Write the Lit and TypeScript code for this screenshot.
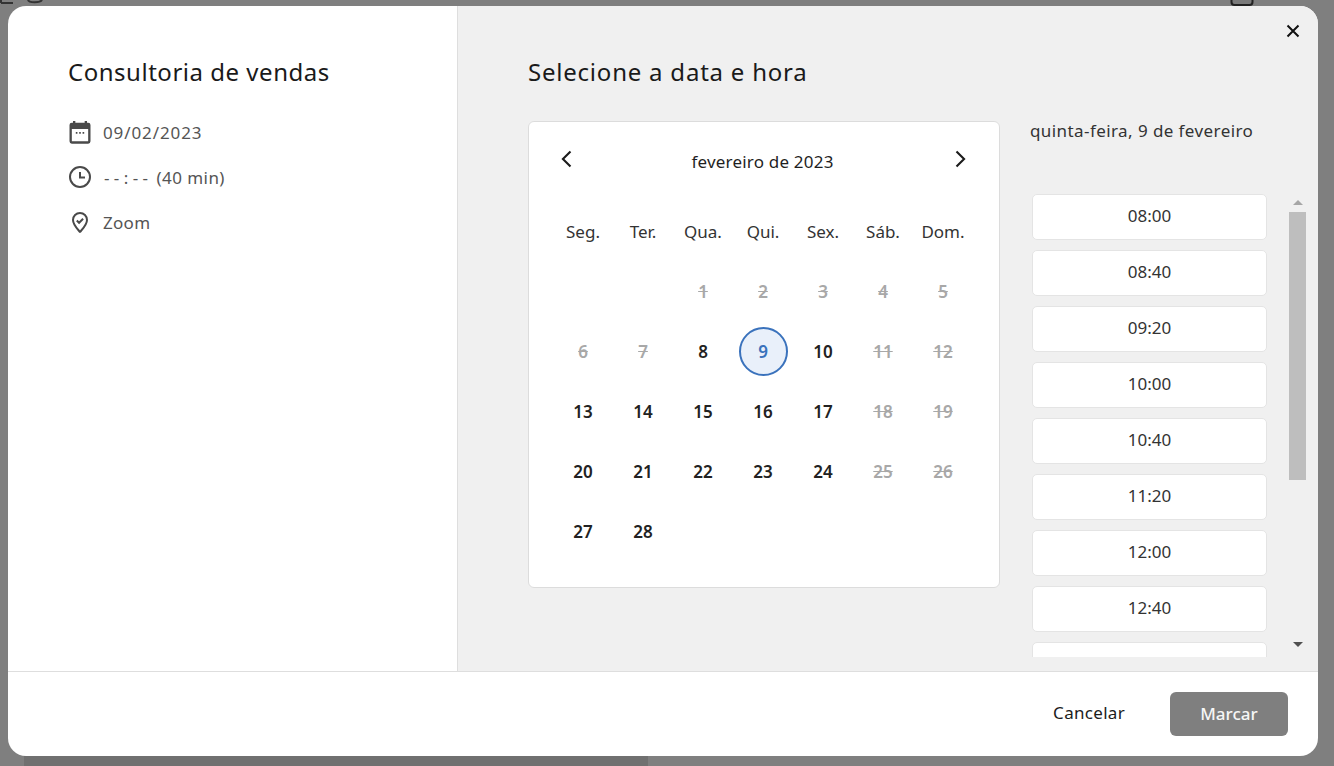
import { LitElement, html, css, svg } from "lit";
import { customElement } from "lit/decorators.js";

const WEEK = ["Seg.", "Ter.", "Qua.", "Qui.", "Sex.", "Sáb.", "Dom."];
const DISABLED = new Set([1, 2, 3, 4, 5, 6, 7, 11, 12, 18, 19, 25, 26]);
const SLOTS = ["08:00", "08:40", "09:20", "10:00", "10:40", "11:20", "12:00", "12:40", "13:20"];

@customElement("app-root")
export class AppRoot extends LitElement {
  static styles = css`
    :host {
      display: block;
      position: relative;
      width: 1334px;
      height: 766px;
      overflow: hidden;
      background: #7f7f7f;
      font-family: "Noto Sans", "Open Sans", sans-serif;
      color: #1c1c1c;
      box-sizing: border-box;
      padding: 6px 16px 10px 8px;
    }
    * { box-sizing: border-box; }
    .backdrop { position: absolute; left: 0; top: 0; width: 1334px; height: 766px; display: block; }
    .modal {
      position: relative;
      height: 750px;
      border-radius: 18px;
      background: #fff;
      overflow: hidden;
      display: flex;
      flex-direction: column;
    }
    .body { display: flex; height: 666px; flex: none; border-bottom: 1px solid #dedede; }
    .left {
      width: 450px;
      flex: none;
      border-right: 1px solid #dedede;
      padding: 50px 0 0 60px;
    }
    .left h2, .right h2 {
      margin: 0;
      font-size: 24px;
      line-height: 32px;
      font-weight: 400;
      color: #1a1a1a;
    }
    .left h2 { letter-spacing: 0.52px; }
    .right h2 { letter-spacing: 0.78px; }
    .info { margin-top: 29px; display: flex; flex-direction: column; gap: 15px; }
    .info-row {
      display: flex;
      align-items: center;
      height: 30px;
      gap: 11px;
      font-size: 17px;
      letter-spacing: 0.3px;
      color: #555;
    }
    .info-row svg { width: 24px; height: 24px; flex: none; overflow: visible; }
    .info-row svg.cal { width: 28px; height: 28px; margin: 0 -2px; }
    .date { letter-spacing: 0.9px; }
    .dash { letter-spacing: 4.4px; margin-right: 4px; margin-left: 1px; }
    .paren { letter-spacing: 0.45px; }
    .right { flex: 1; background: #f0f0f0; padding: 50px 0 0 70px; position: relative; }
    .columns { display: flex; margin-top: 33px; }
    .card {
      width: 472px;
      height: 467px;
      flex: none;
      background: #fff;
      border: 1px solid #dcdcdc;
      border-radius: 6px;
      padding: 0 24px;
    }
    .cal-head {
      height: 79px;
      display: flex;
      align-items: center;
      justify-content: space-between;
      font-size: 17px;
      letter-spacing: 0.2px;
      color: #1f1f1f;
      padding: 0 1px 0 0;
    }
    .cal-head span { padding-right: 2px; }
    .cal-head svg { width: 28px; height: 28px; display: block; margin-top: -5px; }
    .grid {
      display: grid;
      grid-template-columns: repeat(7, 60px);
      grid-auto-rows: 60px;
    }
    .wd {
      display: flex;
      align-items: center;
      justify-content: center;
      font-size: 17px;
      color: #333;
    }
    .day {
      display: flex;
      align-items: center;
      justify-content: center;
      font-size: 17px;
      font-weight: 600;
      color: #222;
    }
    .day.off { color: #a8a8a8; text-decoration: line-through; }
    .day.sel span {
      width: 49px;
      height: 49px;
      border-radius: 50%;
      border: 2px solid #3a72bc;
      background: #e9f0fa;
      color: #3a72bc;
      display: flex;
      align-items: center;
      justify-content: center;
    }
    .times { margin-left: 30px; width: 290px; }
    .times-title { font-size: 17px; line-height: 20px; letter-spacing: 0.42px; color: #333; white-space: nowrap; }
    .scroller { display: flex; margin-top: 53px; margin-left: 2px; height: 463px; }
    .slots { width: 235px; height: 463px; overflow: hidden; display: flex; flex-direction: column; gap: 10px; flex: none; }
    .slot {
      height: 46px;
      flex: none;
      background: #fff;
      border: 1px solid #e4e4e4;
      border-radius: 5px;
      display: flex;
      align-items: center;
      justify-content: center;
      font-size: 17px;
      color: #333;
      padding-bottom: 3px;
    }
    .bar {
      width: 17px;
      margin-left: 22px;
      display: flex;
      flex-direction: column;
      align-items: center;
    }
    .arrow { width: 0; height: 0; border-left: 5px solid transparent; border-right: 5px solid transparent; }
    .arrow.up { border-bottom: 5px solid #a6a6a6; margin-top: 6px; }
    .arrow.down { border-top: 5px solid #505050; margin-top: 162px; }
    .thumb { width: 17px; height: 268px; margin-top: 7px; background: #bebebe; }
    .close {
      position: absolute;
      top: 13px;
      right: 13px;
      width: 24px;
      height: 24px;
    }
    .close svg { width: 24px; height: 24px; display: block; }
    .footer {
      flex: 1;
      display: flex;
      align-items: center;
      justify-content: flex-end;
      padding: 0 30px 0 0;
      gap: 45px;
    }
    .cancel { font-size: 17px; letter-spacing: 0.3px; color: #1c1c1c; padding-bottom: 3px; }
    .mark {
      width: 118px;
      height: 44px;
      border-radius: 6px;
      background: #7f7f7f;
      color: #f6f6f6;
      font-size: 17px;
      font-weight: 500;
      display: flex;
      align-items: center;
      justify-content: center;
      padding-bottom: 2px;
    }
  `;

  private chevron(d: string) {
    return html`<svg viewBox="0 0 24 24" fill="none" stroke="#1c1c1c" stroke-width="1.800">${svg`<path d=${d} />`}</svg>`;
  }

  render() {
    const blanks = [0, 1];
    const days = Array.from({ length: 28 }, (_, i) => i + 1);
    return html`
      <svg class="backdrop" viewBox="0 0 1334 766">
        <rect x="24" y="756" width="624" height="10" fill="#707070"/>
        <path d="M1 0v3M1 3h12M28 0c1 3 12 3 14 0" fill="none" stroke="#333" stroke-width="2"/>
        <rect x="1231.500" y="-8" width="21" height="13" rx="3" fill="#7a7a7a" stroke="#222" stroke-width="2"/>
      </svg>
      <div class="modal">
        <div class="body">
          <div class="left">
            <h2>Consultoria de vendas</h2>
            <div class="info">
              <div class="info-row">
                <svg class="cal" viewBox="0 0 24 24" fill="#4a4a4a"><path fill-rule="evenodd" d="M5 4h1V2.500h2V4h8V2.500h2V4h1a2 2 0 0 1 2 2v14a2 2 0 0 1-2 2H5a2 2 0 0 1-2-2V6a2 2 0 0 1 2-2zm0 5.500V20h14V9.500z"/><path d="M8.400 12h1.400v1.400H8.400zm2.900 0h1.400v1.400h-1.400zm2.900 0h1.400v1.400h-1.400z"/></svg>
                <span class="date">09/02/2023</span>
              </div>
              <div class="info-row">
                <svg viewBox="0 0 24 24" fill="none" stroke="#4a4a4a" stroke-width="2"><circle cx="12" cy="12" r="10"/><path d="M12 7v5.500h5"/></svg>
                <span><span class="dash">--:--</span><span class="paren">(40 min)</span></span>
              </div>
              <div class="info-row">
                <svg viewBox="0 0 24 24" fill="none" stroke="#4a4a4a" stroke-width="2"><path d="M12 22c-1.500-2-7-7-7-12a7 7 0 0 1 14 0c0 5-5.500 10-7 12z" stroke-linejoin="round"/><path d="M8.800 10.500l2.300 2.300 4-4"/></svg>
                <span>Zoom</span>
              </div>
            </div>
          </div>
          <div class="right">
            <h2>Selecione a data e hora</h2>
            <div class="columns">
              <div class="card">
                <div class="cal-head">
                  ${this.chevron("M15 5.500l-6.500 6.500 6.500 6.500")}
                  <span>fevereiro de 2023</span>
                  ${this.chevron("M9 5.500l6.500 6.500-6.500 6.500")}
                </div>
                <div class="grid">
                  ${WEEK.map((w) => html`<div class="wd">${w}</div>`)}
                  ${blanks.map(() => html`<div></div>`)}
                  ${days.map((d) => {
                    const cls = d === 9 ? "day sel" : DISABLED.has(d) ? "day off" : "day";
                    return html`<div class=${cls}><span>${d}</span></div>`;
                  })}
                </div>
              </div>
              <div class="times">
                <div class="times-title">quinta-feira, 9 de fevereiro</div>
                <div class="scroller">
                  <div class="slots">
                    ${SLOTS.map((s, i) => html`<div class="slot">${i < 8 ? s : ""}</div>`)}
                  </div>
                  <div class="bar">
                    <div class="arrow up"></div>
                    <div class="thumb"></div>
                    <div class="arrow down"></div>
                  </div>
                </div>
              </div>
            </div>
          </div>
        </div>
        <div class="footer">
          <div class="cancel">Cancelar</div>
          <div class="mark">Marcar</div>
        </div>
        <div class="close">
          <svg viewBox="0 0 24 24" fill="none" stroke="#111" stroke-width="2"><path d="M6.500 6.500l11 11M17.500 6.500l-11 11"/></svg>
        </div>
      </div>
    `;
  }
}
